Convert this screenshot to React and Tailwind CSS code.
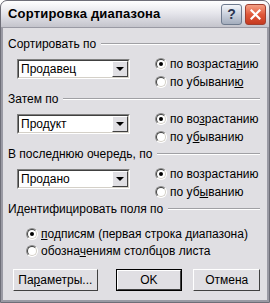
const font = { fontFamily: '"Liberation Sans", Arial, sans-serif' };

function Combo({ value }) {
  return (
    <div className="w-[113px] h-[20px] bg-white border-t border-l border-[#808080] border-b border-r border-b-white border-r-white">
      <div className="h-full flex border-t border-l border-[#404040] border-b border-r border-b-[#d4d0c8] border-r-[#d4d0c8]">
        <div className="flex-1 flex items-center pl-[2px] text-[12px] leading-none">{value}</div>
        <div className="w-[16px] h-full bg-[#e0dfe3] border-t border-l border-white border-b border-r border-b-[#404040] border-r-[#404040] flex items-center justify-center">
          <div className="w-0 h-0 border-l-[4px] border-r-[4px] border-t-[4px] border-l-transparent border-r-transparent border-t-black" />
        </div>
      </div>
    </div>
  );
}

function Radio({ checked, children }) {
  return (
    <div className="flex items-center gap-[3px] h-[18px]">
      <div className="w-[12px] h-[12px] rounded-full bg-white border border-[#8a8a8a] border-b-white border-r-white flex items-center justify-center">
        <div className="w-[10px] h-[10px] rounded-full border border-[#404040] border-b-[#d4d0c8] border-r-[#d4d0c8] flex items-center justify-center">
          {checked && <div className="w-[4px] h-[4px] rounded-full bg-black" />}
        </div>
      </div>
      <span className="text-[12px] leading-none">{children}</span>
    </div>
  );
}

function GroupLabel({ children }) {
  return (
    <div className="flex items-center h-[14px] gap-[5px]">
      <span className="text-[12px] leading-none whitespace-nowrap">{children}</span>
      <div className="flex-1 h-[2px] border-t border-[#a0a0a4] border-b border-b-white" />
    </div>
  );
}

function SortSection({ label, value, asc, desc }) {
  return (
    <div className="h-[55px] flex flex-col">
      <GroupLabel>{label}</GroupLabel>
      <div className="flex mt-[-5px]">
        <div className="ml-[9px] mt-[4px] pt-[9px]">
          <Combo value={value} />
        </div>
        <div className="ml-[25px] flex flex-col pt-[9px]">
          <Radio checked>{asc}</Radio>
          <Radio>{desc}</Radio>
        </div>
      </div>
    </div>
  );
}

function Button({ children, isDefault, className }) {
  const inner = (
    <div className="h-full w-full bg-[#e0dfe3] border-t border-l border-white border-b border-r border-b-[#404040] border-r-[#404040] flex items-center justify-center text-[12px] leading-none">
      {children}
    </div>
  );
  return (
    <div className={`h-[22px] ${isDefault ? "border border-black" : ""} ${className}`}>{inner}</div>
  );
}

export default function App() {
  return (
    <div className="w-[270px] h-[303px] bg-white" style={font}>
      <div className="w-full h-full flex flex-col rounded-t-[7px] overflow-hidden bg-[#9a9aa4] border border-[#6e6e78]">
        {/* title bar */}
        <div className="h-[27px] flex items-center pl-[7px] pr-[3px] bg-gradient-to-b from-[#ffffff] via-[#e4e4ea] to-[#c4c4cc] border-b border-[#9a9aa4]">
          <span className="flex-1 text-[13px] font-bold tracking-[0.2px] text-black">Сортировка диапазона</span>
          <div className="flex gap-[3px]">
            <div className="w-[21px] h-[21px] rounded-[3px] border border-[#6f7b8e] bg-gradient-to-b from-[#f4f6fa] via-[#c9d0dc] to-[#a4adbd] flex items-center justify-center text-[14px] font-bold text-[#2a3550]">
              ?
            </div>
            <div className="w-[21px] h-[21px] rounded-[3px] border border-[#a04030] bg-gradient-to-b from-[#f4a085] via-[#e0583a] to-[#c63a20] flex items-center justify-center">
              <svg width="11" height="11" viewBox="0 0 11 11">
                <path d="M1.5 1.5 L9.5 9.5 M9.5 1.5 L1.5 9.5" stroke="white" strokeWidth="2.2" strokeLinecap="square" />
              </svg>
            </div>
          </div>
        </div>

        {/* body */}
        <div className="flex-1 mx-[2px] mb-[2px] bg-[#e0dfe3] pl-[5px] pr-[7px] pt-[9px] flex flex-col text-black">
          <SortSection
            label="Сортировать по"
            value="Продавец"
            asc={<>по возраста<u>н</u>ию</>}
            desc={<>по убывани<u>ю</u></>}
          />
          <SortSection
            label="Затем по"
            value="Продукт"
            asc={<>по во<u>з</u>растанию</>}
            desc={<>по у<u>б</u>ыванию</>}
          />
          <SortSection
            label="В последнюю очередь, по"
            value="Продано"
            asc={<>по возрастанию</>}
            desc={<>по уб<u>ы</u>ванию</>}
          />
          <GroupLabel>Идентифицировать поля по</GroupLabel>
          <div className="ml-[18px] mt-[9px] flex flex-col">
            <div className="h-[17px] flex items-center">
              <Radio checked>
                <u>п</u>одписям (первая строка диапазона)
              </Radio>
            </div>
            <div className="h-[17px] flex items-center">
              <Radio>
                обозна<u>ч</u>ениям столбцов листа
              </Radio>
            </div>
          </div>
          <div className="flex mt-[10px] pl-[5px]">
            <Button className="w-[85px]">
              <span>
                Па<u>р</u>аметры...
              </span>
            </Button>
            <Button isDefault className="w-[67px] ml-[18px]">
              OK
            </Button>
            <Button className="w-[67px] ml-[11px]">Отмена</Button>
          </div>
        </div>
      </div>
    </div>
  );
}
